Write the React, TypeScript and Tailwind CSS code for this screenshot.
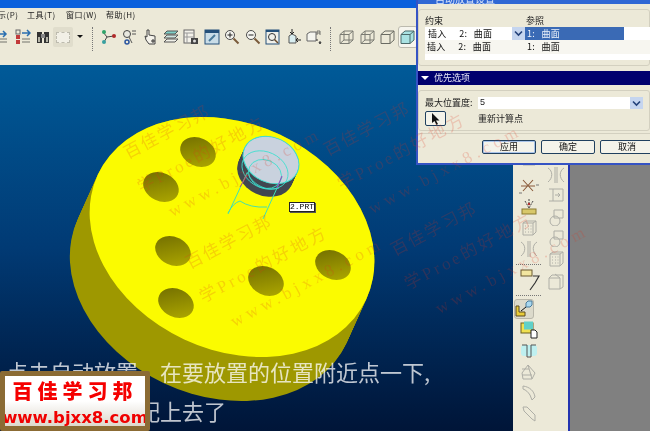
import React from 'react';

const cjk = "font-['Noto_Sans_CJK_SC',sans-serif]";

const holes = [
  [198, 152],
  [161, 187],
  [173, 251],
  [176, 303],
  [266, 281],
  [333, 265],
];

const marks = [
  { x: 125, y: 153, lines: ['百佳学习邦', '学Proe的好地方', 'www.bjxx8.com'] },
  { x: 187, y: 263, lines: ['百佳学习邦', '学Proe的好地方', 'www.bjxx8.com'] },
  { x: 325, y: 150, lines: ['百佳学习邦', '学Proe的好地方', 'www.bjxx8.com'] },
  { x: 392, y: 250, lines: ['百佳学习邦', '学Proe的好地方', 'www.bjxx8.com'] },
];

const Icon = ({ children, w = 16 }: { children: React.ReactNode; w?: number }) => (
  <svg width={w} height="16" viewBox={`0 0 ${w} 16`} fill="none" className="shrink-0">
    {children}
  </svg>
);

const Cube = ({ fill = 'none', stroke = '#6a6b63' }: { fill?: string; stroke?: string }) => (
  <Icon>
    <path d="M1 5.500 L5 2 H14 V11 L10 14.500 H1 Z" stroke={stroke} fill={fill} />
    <path d="M1 5.500 H10 V14.500 M10 5.500 L14 2" stroke={stroke} />
  </Icon>
);

const WireCube = () => (
  <Icon>
    <path d="M1 5.500 L5 2 H14 V11 L10 14.500 H1 Z M1 5.500 H10 V14.500 M10 5.500 L14 2 M5 2 V11 H14 M5 11 L1 14.500" stroke="#7a7b73" />
  </Icon>
);

const Lens = ({ sign }: { sign: '+' | '-' }) => (
  <Icon>
    <circle cx="6" cy="6" r="4.500" stroke="#4b4b4b" fill="#f5f5f0" />
    <path d="M9.500 9.500 L14.500 14.500" stroke="#7a5a3a" strokeWidth="2" />
    <path d={sign === '+' ? 'M3.500 6 H8.500 M6 3.500 V8.500' : 'M3.500 6 H8.500'} stroke="#222" />
  </Icon>
);

const Dotted = () => <div className="h-[24px] w-px shrink-0 border-l border-dotted border-[#777]" />;

const TopToolbar = () => (
  <div className="flex h-[40px] items-start gap-[4.500px] bg-[#ece9d8] pt-[4px] -ml-[6px]">
    <Icon>
      <path d="M2 5 H12 M9 2 L12 5 L9 8" stroke="#2a6fb0" strokeWidth="1.500" />
      <path d="M3 10 H13 M3 13 H13" stroke="#9a9a90" strokeWidth="1.500" />
    </Icon>
    <Icon>
      <rect x="1" y="1" width="4" height="4" stroke="#666" />
      <rect x="1" y="6" width="4" height="4" fill="#c23a3a" />
      <rect x="1" y="11" width="4" height="4" fill="#c23a3a" />
      <path d="M7 4 H15 M12 1 L15 4 L12 7" stroke="#2a6fb0" strokeWidth="1.500" />
      <path d="M7 10 H15 M7 13 H15" stroke="#9a9a90" strokeWidth="1.500" />
    </Icon>
    <Icon>
      <rect x="2" y="3" width="5" height="11" fill="#333" />
      <rect x="9" y="3" width="5" height="11" fill="#333" />
      <rect x="6" y="5" width="4" height="4" fill="#888" />
      <rect x="3" y="8" width="2" height="5" fill="#b5b5a8" />
      <rect x="11" y="8" width="2" height="5" fill="#b5b5a8" />
    </Icon>
    <div className="-ml-[3px] flex h-[20px] w-[20px] -translate-y-[2px] shrink-0 items-center justify-center rounded-[2px] bg-[#e0ddcc]">
      <div className="h-[11px] w-[14px] border border-dashed border-[#bdbbae] bg-[#f2f0e6]" />
    </div>
    <span className="mt-[6px] h-0 w-0 shrink-0 border-x-[3px] border-t-[3px] border-x-transparent border-t-[#111]" />
    <div className="ml-[4px] mr-[4px] -translate-y-[2px]">
      <Dotted />
    </div>
    <Icon>
      <path d="M2 3 L6 8 L13 7 M6 8 L3 13" stroke="#444" />
      <circle cx="3" cy="3" r="2" fill="#2fa36a" />
      <circle cx="13" cy="7" r="2" fill="#b02a2a" />
      <circle cx="3" cy="13" r="2" fill="#38a0a0" />
    </Icon>
    <Icon>
      <circle cx="5" cy="5" r="3.500" stroke="#444" fill="#e8e8df" />
      <path d="M7 8 L10 14 M10 2 H14 M10 5 H14" stroke="#555" />
      <circle cx="5" cy="13" r="2" stroke="#2a55a0" strokeWidth="1.500" />
    </Icon>
    <Icon>
      <path d="M5 1 V8 L3 7 L4 11 L7 15 H13 V7 L7 6 V1 Z" stroke="#444" fill="#f4f2ea" />
      <path d="M9 12 H13 M11 10 V14" stroke="#333" />
    </Icon>
    <Icon>
      <path d="M1 5 L4 2 H15 L12 5 Z" fill="#7fd0c8" stroke="#555" />
      <path d="M1 9 L4 6 H15 L12 9 Z" fill="#cfe5e0" stroke="#555" />
      <path d="M1 13 L4 10 H15 L12 13 Z" fill="#f0f0e8" stroke="#555" />
    </Icon>
    <Icon>
      <rect x="1" y="1" width="10" height="13" fill="#f4f2ea" stroke="#666" />
      <path d="M1 4 H11 M4 4 V14 M1 8 H11" stroke="#999" />
      <rect x="8" y="9" width="7" height="6" fill="#444" />
      <circle cx="11.500" cy="12" r="1.500" fill="#ddd" />
    </Icon>
    <Icon>
      <rect x="1" y="1" width="14" height="14" fill="#c9dde8" stroke="#24507a" />
      <rect x="1" y="1" width="14" height="3" fill="#24507a" />
      <path d="M5 12 L11 6" stroke="#4a7a9a" strokeWidth="2" />
    </Icon>
    <Lens sign="+" />
    <Lens sign="-" />
    <Icon>
      <rect x="1" y="1" width="13" height="14" fill="#f0f0ea" stroke="#24507a" />
      <rect x="1" y="1" width="13" height="2" fill="#24507a" />
      <circle cx="7" cy="8" r="3.500" stroke="#333" />
      <path d="M9.500 10.500 L13 14" stroke="#6a4a2a" strokeWidth="1.500" />
    </Icon>
    <Icon>
      <path d="M3 7 L6 5 L10 7 V14 H3 Z" fill="#d9eef0" stroke="#555" />
      <path d="M6 0 V4 M10 11 H15" stroke="#222" />
      <path d="M4 3 L6 5 L8 3 M12 9 L10 11 L12 13" stroke="#222" />
    </Icon>
    <Icon>
      <path d="M1 5 L4 3 H10 V12 H1 Z" fill="#f4f4ee" stroke="#666" />
      <path d="M11 2 V6 M14 2 V6 M11 2 H14 M11 4 H14" stroke="#555" strokeWidth="0.800" />
      <path d="M11 10 V12 M13 13 H15 L14 15 Z" stroke="#333" />
    </Icon>
    <div className="mx-[3.500px] -translate-y-[2px]">
      <Dotted />
    </div>
    <WireCube />
    <WireCube />
    <Cube />
    <div className="-ml-[3px] -translate-y-[3px] rounded-[3px] border border-[#bcbaae] bg-[#f6f5ee] px-[1px] py-[2px]">
      <Cube fill="#a9e2e2" stroke="#4b6a6a" />
    </div>
  </div>
);

const Gray = ({ d }: { d: string }) => (
  <div className="flex h-5 items-center justify-center">
    <svg width="18" height="18" viewBox="0 0 18 18" fill="none">
      <path d={d} stroke="#aeaea6" />
    </svg>
  </div>
);

const gridIcon = 'M3 4 L6 2 H16 V13 L13 16 H3 Z M3 4 H13 V16 M13 4 L16 2 M5 7 H6 M8 7 H9 M10.500 7 H11.500 M5 10 H6 M8 10 H9 M10.500 10 H11.500 M5 13 H6 M8 13 H9 M10.500 13 H11.500';
const mirrorIcon = 'M1 2 C6 5 6 12 1 16 M17 2 C12 5 12 12 17 16 M8 1 V17 M10 1 V17';
const circleBox = 'M7 2 H16 V10 H7 Z M8 13 m-5 0 a5 5 0 1 0 10 0 a5 5 0 1 0 -10 0';

const LeftTools = () => (
  <div className="flex w-[31px] flex-col gap-px pt-[90px]">
    <Gray d="M3 9 H15 M5 2 V7 M13 2 V7" />
    <div className="flex h-5 items-center justify-center">
      <svg width="20" height="18" viewBox="0 0 20 18" fill="none">
        <path d="M4 3 L14 14 M14 3 L4 14 M2 9 H16" stroke="#8a5a3a" strokeWidth="1.100" />
        <path d="M17 8 H20 M0 16 H3" stroke="#777" />
      </svg>
    </div>
    <div className="flex h-5 items-center justify-center">
      <svg width="18" height="18" viewBox="0 0 18 18" fill="none">
        <path d="M5 3 L9 10 M13 3 L9 10 M9 1 V5" stroke="#444" strokeDasharray="2 1" />
        <circle cx="9" cy="6" r="1.200" fill="#b03030" />
        <rect x="2" y="11" width="14" height="5" fill="#d8c86a" stroke="#8a7a30" />
      </svg>
    </div>
    <Gray d={gridIcon} />
    <Gray d={mirrorIcon} />
    <div className="mx-[3px] h-[5px] border-b border-dotted border-[#777]" />
    <div className="flex h-[26px] items-center justify-center pl-[2px]">
      <svg width="20" height="24" viewBox="0 0 20 24" fill="none">
        <rect x="1" y="3" width="11" height="6" fill="#f2e6a0" stroke="#6a5a30" />
        <path d="M13 9 H19 L15 16 L10 23" stroke="#333" strokeWidth="1.200" />
      </svg>
    </div>
    <div className="mx-[3px] h-[3px] border-b border-dotted border-[#777]" />
    <div className="mt-[2px] ml-[1px] flex h-[20px] w-[20px] items-center justify-center rounded-[3px] border border-[#b9b7aa] bg-[#dcdacb]">
      <svg width="18" height="18" viewBox="0 0 18 18" fill="none">
        <path d="M1 6 H4 V12 H10 V16 H1 Z" fill="#e8cc3a" stroke="#5a4a20" />
        <path d="M11 3 L13 1 H17 V5 L15 7 H11 Z" fill="#a8d8f0" stroke="#4a7a9a" />
        <path d="M6 11 L11 7" stroke="#111" />
      </svg>
    </div>
    <div className="flex h-5 items-center justify-center">
      <svg width="18" height="18" viewBox="0 0 18 18" fill="none">
        <rect x="1" y="2" width="12" height="10" fill="#f0e050" stroke="#6a6020" />
        <rect x="4" y="0.500" width="9" height="8" fill="#60d0c8" />
        <path d="M11 9 H15 L17 11 V17 H11 Z" fill="#fff" stroke="#222" />
      </svg>
    </div>
    <div className="flex h-5 items-center justify-center">
      <svg width="18" height="18" viewBox="0 0 18 18" fill="none">
        <rect x="1" y="3" width="16" height="11" rx="3" fill="#bff0f0" />
        <path d="M2 3 H7 V15 H11 V3 H16" stroke="#555" />
      </svg>
    </div>
    <Gray d="M2 10 L8 2 L15 10 L12 16 H3 Z M2 6 H9 M2 12 H12 M8 2 L12 16" />
    <Gray d="M3 2 C10 3 14 7 15 13 L12 16 L10 11 C8 8 6 6 3 5 Z" />
    <Gray d="M3 2 H7 L15 10 V16 L12 14 L4 6 Z" />
  </div>
);

const RightTools = () => (
  <div className="flex w-[24px] flex-col gap-px pt-[100px]">
    <Gray d={mirrorIcon} />
    <Gray d="M2 2 H16 V14 H2 M6 2 V14 M8 8 H13 M11 6 L13 8 L11 10" />
    <Gray d={circleBox} />
    <Gray d={circleBox} />
    <Gray d={gridIcon} />
    <div className="mt-[2px]">
      <Gray d="M2 5 L5 2 H16 V14 L13 16 H2 Z M2 5 H13 V16 M8 1 L13 5" />
    </div>
  </div>
);

const Part = () => {
  const steps = Array.from({ length: 14 }, (_, i) => i);
  return (
    <g>
      {steps.map((i) => {
        const cx = 271 - i * 0.45;
        const cy = 160 + i;
        return <ellipse key={i} cx={cx} cy={cy} rx="29" ry="22.500" transform={`rotate(25 ${cx} ${cy})`} fill="#414750" />;
      })}
      <ellipse cx="271" cy="160" rx="29" ry="22.500" transform="rotate(25 271 160)" fill="#c9d2de" stroke="#3ee0d0" strokeWidth="1" />
      <ellipse cx="265" cy="170" rx="24" ry="18" transform="rotate(25 265 170)" fill="none" stroke="#3ee0d0" strokeWidth="0.800" />
      <ellipse cx="265" cy="174" rx="17" ry="14" transform="rotate(25 265 174)" fill="none" stroke="#3ee0d0" strokeWidth="0.800" />
      <path d="M247 172 C252 184 266 192 279 188" fill="none" stroke="#3ee0d0" strokeWidth="0.800" />
      <path d="M247 173 L228 214 M282 177 L263 219" fill="none" stroke="#3ee0b8" strokeWidth="1" />
      <path d="M228 213 Q233 203 240 201 Q250 208 267 207" fill="none" stroke="#48e0a8" strokeWidth="1" />
      <path d="M282 176 L277 188" stroke="#a040c0" strokeWidth="1" />
      <path d="M247 175 L240 187" stroke="#d04060" strokeWidth="1" />
    </g>
  );
};

const Model = () => {
  const steps = Array.from({ length: 23 }, (_, i) => i);
  return (
    <svg width="513" height="366" viewBox="0 65 513 366" className="block">
      <defs>
        <linearGradient id="hole" x1="0" y1="0" x2="1" y2="1">
          <stop offset="0" stopColor="#6e6a00" />
          <stop offset="1" stopColor="#b3ad00" />
        </linearGradient>
      </defs>
      {steps.map((i) => {
        const cx = 232 - i * 0.9;
        const cy = 237 + i * 2;
        return <ellipse key={i} cx={cx} cy={cy} rx="148" ry="113" transform={`rotate(25 ${cx} ${cy})`} fill="#9e9800" />;
      })}
      <ellipse cx="232" cy="237" rx="148" ry="113" transform="rotate(25 232 237)" fill="#fbfb00" />
      {holes.map(([x, y]) => (
        <ellipse key={x} cx={x} cy={y} rx="18.500" ry="14" transform={`rotate(25 ${x} ${y})`} fill="url(#hole)" />
      ))}
      <Part />
    </svg>
  );
};

const GroupButton = ({ label, primary }: { label: string; primary?: boolean }) => (
  <div
    className={
      primary
        ? 'flex h-[14px] w-[54px] shrink-0 items-center justify-center rounded-[2px] border border-[#20405f] bg-[#f4f3ea] shadow-[inset_0_0_0_1px_#a9c4ea] text-[9px] text-[#111]'
        : 'flex h-[14px] w-[54px] shrink-0 items-center justify-center rounded-[2px] border border-[#20405f] bg-[#f4f3ea] text-[9px] text-[#111]'
    }
  >
    {label}
  </div>
);

const Chevron = () => (
  <div className="flex h-full w-[13px] shrink-0 items-center justify-center bg-[#c5d5ef]">
    <svg width="9" height="7" viewBox="0 0 9 7" fill="none">
      <path d="M1 1.500 L4.500 5 L8 1.500" stroke="#24427a" strokeWidth="1.600" />
    </svg>
  </div>
);

const Dialog = () => (
  <div className={`absolute left-[416px] top-0 flex h-[165px] w-[234px] flex-col border-l-[2px] border-b-[2px] border-[#3553c4] bg-[#ece9d8] ${cjk}`}>
    <div className="flex h-[4px] items-end overflow-hidden bg-[#2f67d4] pl-[17px]">
      <span className="shrink-0 text-[10px] leading-[10px] text-[#dfe8fa]">自动放置设置</span>
    </div>
    <div className="mt-[5px] h-[57px] rounded-[3px] border border-[#d3d0c0] pt-[5px] pl-[6px]">
      <div className="flex h-[12px] text-[9px] leading-[12px] text-[#222]">
        <span className="w-[101px]">约束</span>
        <span>参照</span>
      </div>
      <div className="h-[33px] w-[230px] bg-white text-[9px] tracking-[0.300px] text-[#111] [word-spacing:4px]">
        <div className="flex h-[13px] items-center">
          <div className="flex h-full w-[100px] items-center justify-between pl-[3px]">
            <span className="whitespace-pre">插入  2: 曲面</span>
            <Chevron />
          </div>
          <div className="flex h-full w-[99px] items-center bg-[#3a6ab5] pl-[2px] text-[#eef3fb]">
            <span className="whitespace-pre">1: 曲面</span>
          </div>
        </div>
        <div className="flex h-[14px] items-center bg-[#f7f6f0]">
          <span className="w-[100px] whitespace-pre pl-[2px]">插入  2: 曲面</span>
          <span className="whitespace-pre pl-[2px]">1: 曲面</span>
        </div>
      </div>
    </div>
    <div className="mt-[5px] flex h-[14px] items-center gap-[5px] bg-[#00006e] pl-[3px] text-[9px] text-[#e8e8f8]">
      <span className="h-0 w-0 border-x-[4px] border-t-[4px] border-x-transparent border-t-white" />
      优先选项
    </div>
    <div className="mt-[5px] h-[41px] rounded-[3px] border border-[#d3d0c0] px-[6px] pt-[6px] text-[9px] text-[#222]">
      <div className="flex h-[12px] items-center">
        <span className="w-[53px] shrink-0">最大位置度:</span>
        <div className="flex h-full w-[170px] items-center justify-between bg-white pl-[2px] font-['Liberation_Sans',sans-serif]">
          5
          <Chevron />
        </div>
      </div>
      <div className="mt-[2px] flex items-start">
        <div className="flex h-[15px] w-[21px] shrink-0 items-center justify-center rounded-[2px] border border-[#20405f] bg-[#f4f3ea]">
          <svg width="9" height="12" viewBox="0 0 9 12">
            <path d="M1 0 V10 L3.500 8 L5.500 12 L7 11 L5 7.500 H8.500 Z" fill="#111" />
          </svg>
        </div>
        <span className="ml-[32px] mt-[1px]">重新计算点</span>
      </div>
    </div>
    <div className="mt-[2px] flex justify-start gap-[5px] border-t border-[#d3d0c0] pl-[64px] pt-[6px]">
      <GroupButton label="应用" primary />
      <GroupButton label="确定" />
      <GroupButton label="取消" />
    </div>
  </div>
);

const Watermarks = () => (
  <>
    {marks.map((m) => (
      <div
        key={m.x}
        className="pointer-events-none absolute origin-top-left -rotate-[28deg] font-['Liberation_Serif','Noto_Sans_CJK_SC',serif] text-[17px] leading-[36px] tracking-[3px] whitespace-nowrap text-[#e03020]/20"
        style={{ left: m.x - 8, top: m.y - 14 }}
      >
        {m.lines.map((line, i) => (
          <div key={line} className={i === 2 ? 'ml-[12px] tracking-[4.500px]' : i === 1 ? '-ml-[4px]' : 'tracking-[2px]'}>
            {line}
          </div>
        ))}
      </div>
    ))}
  </>
);

const Logo = () => (
  <div className="absolute bottom-0 left-0 flex h-[60px] w-[150px] flex-col items-center overflow-hidden rounded-[2px] border-[5px] border-[#8b6b34] bg-gradient-to-b from-white via-white to-[#ddd8cc]">
    <div className={`text-[20px] font-black leading-[30px] tracking-[5px] whitespace-nowrap text-[#f50000] ${cjk}`}>百佳学习邦</div>
    <div className="mt-[3px] text-[16.500px] font-bold leading-[17px] whitespace-nowrap text-[#f00000] font-['DejaVu_Sans',sans-serif]">www.bjxx8.com</div>
  </div>
);

const Caption = () => (
  <div className={`absolute left-[6px] top-[352px] text-[22px] leading-[39px] whitespace-nowrap text-white/75 ${cjk}`}>
    <div>点击自动放置，在要放置的位置附近点一下,</div>
    <div>这样它就自动配上去了</div>
  </div>
);

export default function App() {
  return (
    <div className="relative flex h-[431px] w-[650px] flex-col overflow-hidden bg-[#808080] blur-[0.4px]">
      <div className="h-[8px] bg-[#0a60dc]" />
      <div className={`flex h-[17px] items-center bg-[#ece9d8] pb-[4px] pl-[27px] text-[8px] tracking-[0.500px] text-[#222] ${cjk}`}>
        <span className="-ml-[29px] w-[29px]">示(P)</span>
        <span className="w-[39px]">工具(T)</span>
        <span className="w-[40px]">窗口(W)</span>
        <span>帮助(H)</span>
      </div>
      <TopToolbar />
      <div className="flex flex-1">
        <div className="w-[513px] bg-gradient-to-b from-[#005a98] via-[#013a74] to-[#001538]">
          <Model />
        </div>
        <div className="flex w-[55px] bg-[#ece9d8]">
          <LeftTools />
          <RightTools />
        </div>
        <div className="w-[2px] bg-[#2333b0]" />
      </div>
      <Dialog />
      <Caption />
      <Watermarks />
      <div className="absolute left-[289px] top-[202px] flex h-[10px] w-[26px] items-center justify-center border border-[#222] bg-white font-['Liberation_Mono',monospace] text-[8px] leading-none text-black shadow-[1px_1px_0_#555]">
        2.PRT
      </div>
      <Logo />
    </div>
  );
}
